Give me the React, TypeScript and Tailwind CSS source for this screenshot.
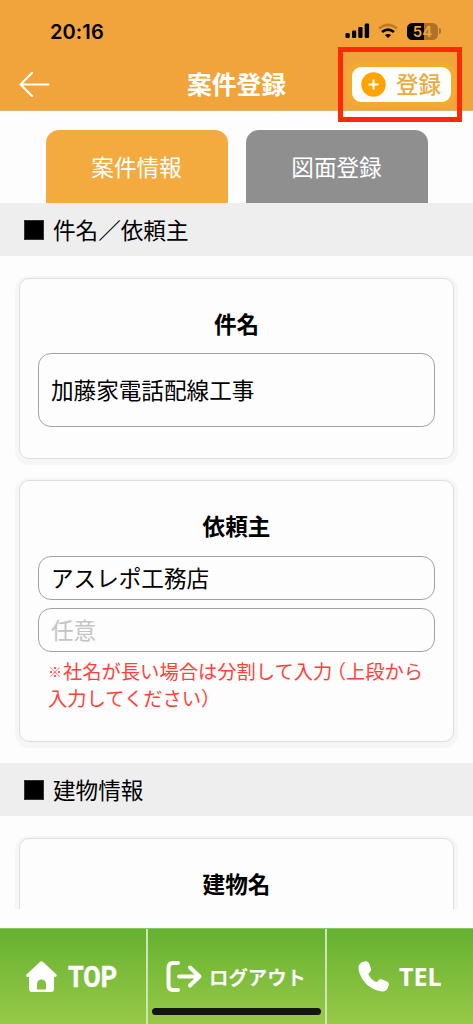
import type { ReactNode } from "react";

function StatusBar() {
  return (
    <div className="flex h-[62px] items-center justify-between pl-[50px] pr-[32px]">
      <span className="pt-[2px] font-['Inter'] text-[20px] font-semibold leading-6 tracking-[0.1px] text-black">20:16</span>
      <div className="flex items-center">
        <svg width="25" height="16" viewBox="0 0 25 16" className="mr-[8px]">
          <rect x="0.5" y="10" width="4.2" height="5" rx="1.2" />
          <rect x="7" y="7.5" width="4.2" height="7.5" rx="1.2" />
          <rect x="13.3" y="4" width="4.2" height="11" rx="1.2" />
          <rect x="19.7" y="0.5" width="4.4" height="14.5" rx="1.2" />
        </svg>
        <svg width="20" height="16" viewBox="0 0 20 16" className="mr-[9px]" fill="none" strokeWidth="2.7">
          <path d="M1 5.5Q10-1.8 19 5.5" stroke="#bd7d28" />
          <path d="M4 9Q10 4.3 16 9" stroke="#000" />
          <path d="M6.9 12Q10 9.8 13.1 12L10 15Z" fill="#000" />
        </svg>
        <div className="relative flex h-[17px] w-[31px] items-center overflow-hidden rounded-[5.5px] bg-[#ad7228]">
          <div className="h-full w-[17px] bg-black" />
          <span className="absolute inset-0 text-center font-['Inter'] text-[15px] font-semibold leading-[17px] text-[#f1a63c]">
            54
          </span>
        </div>
        <div className="ml-[1px] h-[6px] w-[2px] rounded-r-full bg-[#ad7228]" />
      </div>
    </div>
  );
}

function Header() {
  return (
    <header className="relative h-[111px] shrink-0 border-b border-[#dcb475] bg-[#f1a43c]">
      <StatusBar />
      <div className="grid h-[42px] grid-cols-[1fr_110px_1fr] items-center pl-[19px] pr-[17px]">
        <svg width="31" height="26" viewBox="0 0 31 26" fill="none" stroke="#fff" strokeWidth="2.1" strokeLinecap="round" strokeLinejoin="round">
          <path d="M13 1 1.5 12.5 13 24M1.5 12.5H29.5" />
        </svg>
        <h1 className="whitespace-nowrap pb-[3px] pr-[2px] text-center text-[24.8px] font-bold leading-[42px] text-white">案件登録</h1>
        <button className="flex h-[45px] w-[109px] items-center justify-self-end rounded-[14px] border-[5px] border-[#f4a92f] bg-white pl-[9px]">
          <svg width="25" height="25" viewBox="0 0 25 25" className="shrink-0">
            <circle cx="12.5" cy="12.5" r="12.2" fill="#ffa400" />
            <path d="M7.5 12.5h10M12.5 7.5v10" stroke="#fff" strokeWidth="2" />
          </svg>
          <span className="ml-[10px] whitespace-nowrap pb-[3px] text-[22.5px] font-medium leading-[32px] text-[#efaa40]">登録</span>
        </button>
      </div>
      <div className="absolute left-[338px] top-[47px] z-10 h-[75px] w-[124px] border-[5px] border-[#ff2a05]" />
    </header>
  );
}

function SectionTitle({ children }: { children: ReactNode }) {
  return (
    <div className="flex h-[53px] shrink-0 items-center bg-[#eee] pl-[24px]">
      <div className="mr-[9px] size-[20px] border border-[#333] bg-black" />
      <h2 className="text-[22.6px] leading-[53px] text-black">{children}</h2>
    </div>
  );
}

const cardClass =
  "mx-[19px] rounded-[10px] border border-[#dedede] bg-[#fdfdfd] px-[18px] shadow-[0_2px_1px_4px_#f6f6f6]";

function Field({ value, placeholder, className }: { value?: string; placeholder?: string; className: string }) {
  return (
    <input
      defaultValue={value}
      placeholder={placeholder}
      className={`block w-full rounded-[13px] border-[1.5px] border-[#a2a2a2] bg-transparent pb-[2px] pl-[12px] text-[22.6px] text-black outline-none placeholder:text-[#c4c4c4] ${className}`}
    />
  );
}

function Footer() {
  return (
    <footer className="relative grid h-[96px] shrink-0 grid-cols-[146px_181px_1fr] border-t border-[#8cc565] bg-linear-to-b from-[#65b130] to-[#97c947] text-white">
      <a className="flex items-center pl-[26px]">
        <svg width="31" height="31" viewBox="0 0 31 31" fill="currentColor">
          <path fillRule="evenodd" d="M14.2.7a2 2 0 0 1 2.6 0L30 13c1.5 1.5.7 3-1 3h-1v12a3 3 0 0 1-3 3H6a3 3 0 0 1-3-3V16H2C0 16-.5 14.4 1 13ZM11 28.5h9v-5.5a4.5 4.5 0 0 0-9 0Z" />
        </svg>
        <span className="ml-[11px] w-[49px] origin-left scale-x-[0.84] whitespace-nowrap font-['Roboto'] text-[30px] font-bold leading-[32px] [-webkit-text-stroke:0.5px_white]">
          TOP
        </span>
      </a>
      <a className="flex items-center border-x-2 border-[#cde6ad] pl-[18px]">
        <svg width="37" height="31" viewBox="0 0 37 31" fill="none" stroke="currentColor" strokeWidth="4" strokeLinecap="round" strokeLinejoin="round">
          <path d="M12 2H7Q2.5 2 2.5 7V24Q2.5 29 7 29H12" />
          <path d="M13 15.5H33M24 6.5 33.5 15.5 24 24.5" />
        </svg>
        <span className="ml-[6px] whitespace-nowrap text-[19.4px] font-bold leading-[30px]">ログアウト</span>
      </a>
      <a className="flex items-center pl-[31px]">
        <svg width="31" height="31" viewBox="0 0 31 31" fill="currentColor">
          <path d="M5 .8Q9.8-1 11.2 2.6L12.8 7.2Q13.5 9.5 12 11Q10.2 12.4 10.5 13.5Q13 18.8 18 21Q19.2 21.2 20.2 19.5Q21.8 17.8 24 18.5L29 20.5Q31.5 21.7 30.6 24.5L29.6 27.5Q28 30.8 23.8 30.5C12 29 1.6 19 .5 7.3Q.2 2.8 5 .8Z" />
        </svg>
        <span className="ml-[10px] pb-[2px] font-['Noto_Sans'] text-[25px] font-bold leading-[30px]">TEL</span>
      </a>
      <div className="absolute left-[152px] top-[79px] h-[6.5px] w-[169px] rounded-full bg-[#141412]" />
    </footer>
  );
}

export default function App() {
  return (
    <div className="flex h-[1024px] w-[473px] flex-col overflow-hidden bg-[#fdfdfd] font-['Noto_Sans_CJK_JP',sans-serif]">
      <Header />
      <nav className="flex h-[92px] shrink-0 items-end gap-[18px] pl-[46px]">
        <button className="h-[73px] w-[182px] rounded-t-[13px] bg-[#f3ab3f] pr-[1px] text-[22.6px] text-white">案件情報</button>
        <button className="h-[73px] w-[182px] rounded-t-[13px] bg-[#8f8f8f] pr-[1px] text-[22.6px] text-white">図面登録</button>
      </nav>
      <main className="h-[706px] shrink-0 overflow-hidden">
        <SectionTitle>件名／依頼主</SectionTitle>
        <section className={`${cardClass} mt-[22px] h-[181px] pt-[27px]`}>
          <h3 className="mb-[11px] text-center text-[22.6px] font-bold leading-[36px]">件名</h3>
          <Field value="加藤家電話配線工事" className="h-[74px]" />
        </section>
        <section className={`${cardClass} mt-[21px] h-[262px] pt-[27px]`}>
          <h3 className="mb-[12px] text-center text-[22.6px] font-bold leading-[36px]">依頼主</h3>
          <Field value="アスレポ工務店" className="h-[44px]" />
          <Field placeholder="任意" className="mt-[8px] h-[44px]" />
          <div className="mt-[6px] whitespace-nowrap pl-[10px] text-[19.3px] leading-[27px] text-[#ff4238]">
            <p className="flex">
              <span className="w-[15px] text-[14px] font-bold">※</span>
              <span>社名が長い場合は分割して入力</span>
              <span className="ml-[4px] [font-feature-settings:'halt']">（</span>
              <span>上段から</span>
            </p>
            <p>入力してください）</p>
          </div>
        </section>
        <div className="mt-[21px]">
          <SectionTitle>建物情報</SectionTitle>
        </div>
        <section className={`${cardClass} mt-[22px] h-[181px] pt-[27px]`}>
          <h3 className="text-center text-[22.6px] font-bold leading-[36px]">建物名</h3>
        </section>
      </main>
      <div className="h-[19px] shrink-0" />
      <Footer />
    </div>
  );
}
